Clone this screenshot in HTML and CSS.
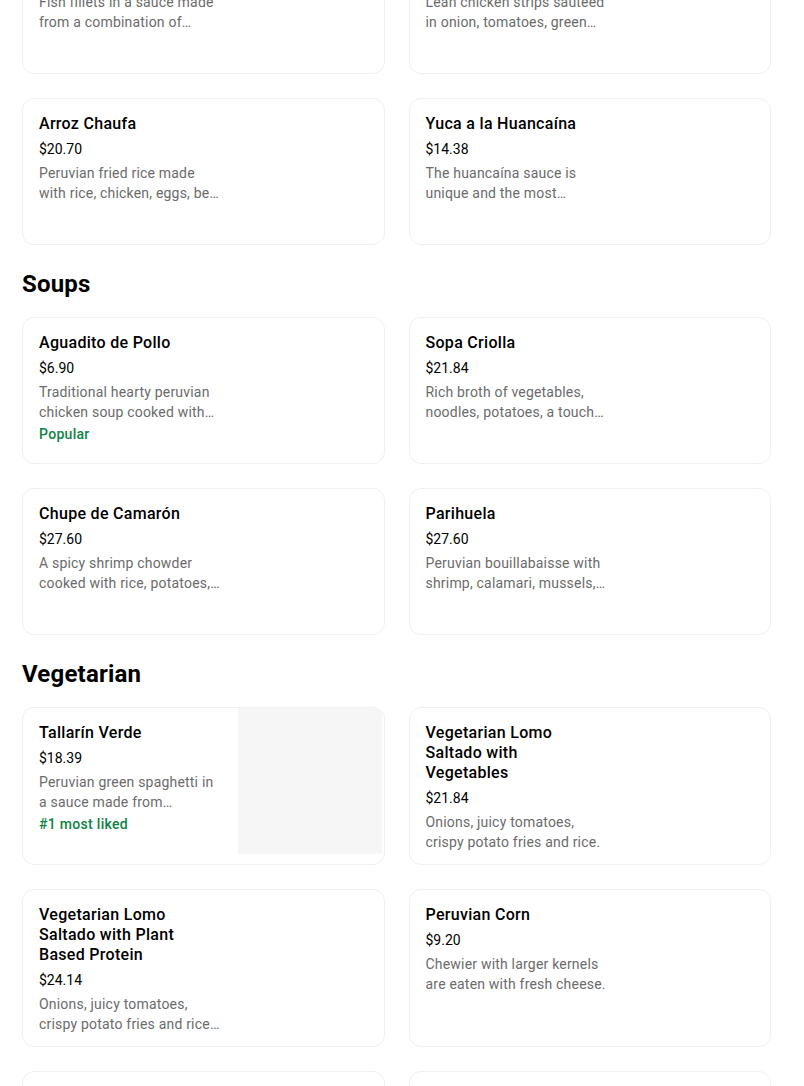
FILE: index.html
```html
<!DOCTYPE html>
<html lang="en">
<head>
<meta charset="utf-8">
<title>Menu</title>
<link rel="stylesheet" href="styles.css">
</head>
<body>
<main class="menu">
  <section class="section section-first">
    <div class="grid">
      <div class="card">
        <div class="info">
          <div class="title">Pescado a lo Macho</div>
          <div class="price">$24.14</div>
          <div class="desc">Fish fillets in a sauce made from a combination of seafood, peppers and spices.</div>
        </div>
        <div class="thumb-slot"></div>
      </div>
      <div class="card">
        <div class="info">
          <div class="title">Saltado de Pollo</div>
          <div class="price">$21.84</div>
          <div class="desc">Lean chicken strips sauteed in onion, tomatoes, green onions, fries and rice.</div>
        </div>
        <div class="thumb-slot"></div>
      </div>
      <div class="card">
        <div class="info">
          <div class="title">Arroz Chaufa</div>
          <div class="price">$20.70</div>
          <div class="desc">Peruvian fried rice made with rice, chicken, eggs, be&#8203;an sprouts and green onions.</div>
        </div>
        <div class="thumb-slot"></div>
      </div>
      <div class="card">
        <div class="info">
          <div class="title">Yuca a la Huancaína</div>
          <div class="price">$14.38</div>
          <div class="desc">The huancaína sauce is unique and the most traditional Peruvian sauce.</div>
        </div>
        <div class="thumb-slot"></div>
      </div>
    </div>
  </section>

  <section class="section">
    <h2 class="section-title">Soups</h2>
    <div class="grid">
      <div class="card">
        <div class="info">
          <div class="title">Aguadito de Pollo</div>
          <div class="price">$6.90</div>
          <div class="desc">Traditional hearty peruvian chicken soup cooked with cilantro, rice and vegetables.</div>
          <div class="tag">Popular</div>
        </div>
        <div class="thumb-slot"></div>
      </div>
      <div class="card">
        <div class="info">
          <div class="title">Sopa Criolla</div>
          <div class="price">$21.84</div>
          <div class="desc">Rich broth of vegetables, noodles, potatoes, a touch of milk and beef.</div>
        </div>
        <div class="thumb-slot"></div>
      </div>
      <div class="card">
        <div class="info">
          <div class="title">Chupe de Camarón</div>
          <div class="price">$27.60</div>
          <div class="desc">A spicy shrimp chowder cooked with rice, potatoes, corn, milk and eggs.</div>
        </div>
        <div class="thumb-slot"></div>
      </div>
      <div class="card">
        <div class="info">
          <div class="title">Parihuela</div>
          <div class="price">$27.60</div>
          <div class="desc">Peruvian bouillabaisse with shrimp, calamari, mussels, fish and clams.</div>
        </div>
        <div class="thumb-slot"></div>
      </div>
    </div>
  </section>

  <section class="section">
    <h2 class="section-title">Vegetarian</h2>
    <div class="grid">
      <div class="card">
        <div class="info">
          <div class="title">Tallarín Verde</div>
          <div class="price">$18.39</div>
          <div class="desc">Peruvian green spaghetti in a sauce made from<br>spinach, basil and fresh cheese.</div>
          <div class="tag">#1 most liked</div>
        </div>
        <div class="thumb-slot"><div class="thumb"></div></div>
      </div>
      <div class="card">
        <div class="info">
          <div class="title">Vegetarian Lomo Saltado with Vegetables</div>
          <div class="price">$21.84</div>
          <div class="desc">Onions, juicy tomatoes, crispy potato fries and rice.</div>
        </div>
        <div class="thumb-slot"></div>
      </div>
      <div class="card">
        <div class="info">
          <div class="title">Vegetarian Lomo Saltado with Plant Based Protein</div>
          <div class="price">$24.14</div>
          <div class="desc">Onions, juicy tomatoes, crispy potato fries and rice. Served with plant based protein.</div>
        </div>
        <div class="thumb-slot"></div>
      </div>
      <div class="card">
        <div class="info">
          <div class="title">Peruvian Corn</div>
          <div class="price">$9.20</div>
          <div class="desc">Chewier with larger kernels are eaten with fresh cheese.</div>
        </div>
        <div class="thumb-slot"></div>
      </div>
      <div class="card">
        <div class="info">
          <div class="title">Tacu Tacu Vegetariano</div>
          <div class="price">$19.54</div>
          <div class="desc">Pan fried beans and rice with sautéed vegetables.</div>
        </div>
        <div class="thumb-slot"></div>
      </div>
      <div class="card">
        <div class="info">
          <div class="title">Papa a la Huancaína</div>
          <div class="price">$12.64</div>
          <div class="desc">Boiled potatoes covered with huancaína sauce.</div>
        </div>
        <div class="thumb-slot"></div>
      </div>
    </div>
  </section>
</main>
</body>
</html>
```

FILE: styles.css
```css
* {
  box-sizing: border-box;
}

html, body {
  margin: 0;
  padding: 0;
  background: #ffffff;
}

body {
  font-family: Roboto, "Liberation Sans", Arial, sans-serif;
  color: #000000;
  overflow: hidden;
}

.menu {
  width: 749px;
  margin: -73px 0 0 22px;
}

.section {
  margin-bottom: 23px;
}

.section-title {
  margin: 0 0 17px 0;
  font-size: 24px;
  line-height: 32px;
  font-weight: 700;
  letter-spacing: 0.2px;
}

.grid {
  display: grid;
  grid-template-columns: 1fr 1fr;
  column-gap: 24px;
  row-gap: 24px;
}

.card {
  display: flex;
  min-height: 147px;
  border: 1px solid #f0f0f0;
  border-radius: 12px;
  overflow: hidden;
  background: #ffffff;
}

.info {
  flex: 1;
  min-width: 0;
  padding: 15px 16px 12px 16px;
}

.title {
  max-width: 176px;
  font-size: 16px;
  line-height: 20px;
  font-weight: 500;
  letter-spacing: 0.3px;
  color: #000000;
}

.price {
  margin-top: 5px;
  font-size: 14px;
  line-height: 20px;
  color: #000000;
}

.desc {
  margin-top: 4px;
  font-size: 14px;
  line-height: 20px;
  letter-spacing: 0.2px;
  color: #6b6b6b;
  display: -webkit-box;
  -webkit-line-clamp: 2;
  -webkit-box-orient: vertical;
  overflow: hidden;
}

.tag {
  margin-top: 2px;
  font-size: 14px;
  line-height: 20px;
  font-weight: 500;
  letter-spacing: 0.3px;
  color: #0e8345;
}

.thumb-slot {
  flex: 0 0 146px;
  display: flex;
  align-items: flex-start;
  padding-right: 2px;
}

.thumb {
  width: 144px;
  height: 146px;
  background: #f6f6f6;
}
```
